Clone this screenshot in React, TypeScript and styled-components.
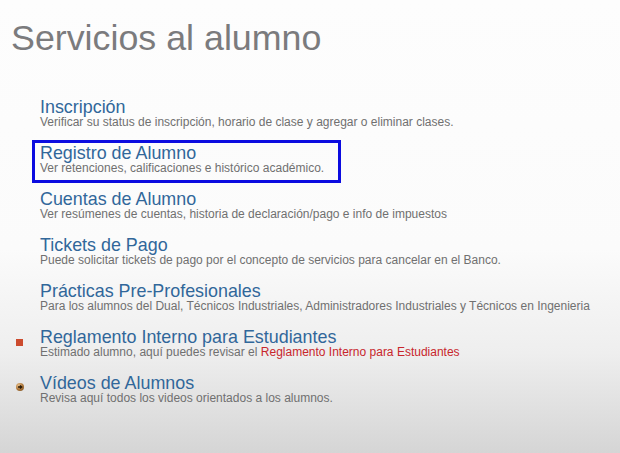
import styled, { createGlobalStyle } from "styled-components"

const GlobalStyle = createGlobalStyle`
html, body {
    margin: 0;
    padding: 0;
}
body {
    font-family: "Liberation Sans", Arial, sans-serif;
}
`

const Page = styled.div`
min-height: 453px;
height: 100vh;
box-sizing: border-box;
padding: 18px 0 0 12px;
background: linear-gradient(to bottom, #fdfdfd 0%, #fbfbfb 55%, #eeeeee 78%, #d5d5d5 100%);
overflow: hidden;
`

const Heading = styled.h1`
margin: 0 0 0 -1px;
font-size: 35.8px;
font-weight: normal;
line-height: 41px;
color: #7b7b7d;
`

const List = styled.div`
display: flex;
flex-direction: column;
gap: 3px;
margin-top: 35px;
`

const Row = styled.div`
display: flex;
align-items: flex-start;
`

const IconSlot = styled.div`
width: 20px;
flex: none;
`

const Square = styled.div`
width: 7px;
height: 7px;
margin: 15px 0 0 4px;
background: #cc4b2e;
`

const Ball = styled.div`
width: 8px;
height: 8px;
margin: 13px 0 0 4px;
border-radius: 50%;
background: radial-gradient(circle at 35% 30%, #e6bd88 0%, #ab7438 55%, #70481c 100%);
display: flex;

svg {
    display: block;
}
`

const Item = styled.div<{ $active?: boolean }>`
display: flex;
flex-direction: column;
padding: 1px 14px 5px 5px;
border: 3px solid ${(p) => (p.$active ? "#0c0ce0" : "transparent")};
`

const ItemTitle = styled.a`
font-size: 17.9px;
line-height: 18px;
color: #31679a;
text-decoration: none;
white-space: nowrap;
`

const ItemText = styled.div`
font-size: 12px;
line-height: 13px;
color: #707070;
white-space: nowrap;
`

const RedLink = styled.a`
color: #c8262c;
text-decoration: none;
`

type Service = {
    title: string
    text: React.ReactNode
    icon?: "square" | "ball"
    active?: boolean
}

const services: Service[] = [
    {
        title: "Inscripción",
        text: "Verificar su status de inscripción, horario de clase y agregar o eliminar clases.",
    },
    {
        title: "Registro de Alumno",
        text: "Ver retenciones, calificaciones e histórico académico.",
        active: true,
    },
    {
        title: "Cuentas de Alumno",
        text: "Ver resúmenes de cuentas, historia de declaración/pago e info de impuestos",
    },
    {
        title: "Tickets de Pago",
        text: "Puede solicitar tickets de pago por el concepto de servicios para cancelar en el Banco.",
    },
    {
        title: "Prácticas Pre-Profesionales",
        text: "Para los alumnos del Dual, Técnicos Industriales, Administradores Industriales y Técnicos en Ingenieria",
    },
    {
        title: "Reglamento Interno para Estudiantes",
        text: (
            <>
                Estimado alumno, aquí puedes revisar el{" "}
                <RedLink href="#">Reglamento Interno para Estudiantes</RedLink>
            </>
        ),
        icon: "square",
    },
    {
        title: "Vídeos de Alumnos",
        text: "Revisa aquí todos los videos orientados a los alumnos.",
        icon: "ball",
    },
]

const App = () => {
    return (
        <Page>
            <GlobalStyle />
            <Heading>Servicios al alumno</Heading>
            <List>
                {services.map((s) => (
                    <Row key={s.title}>
                        <IconSlot>
                            {s.icon === "square" && <Square />}
                            {s.icon === "ball" && (
                                <Ball>
                                    <svg width="8" height="8" viewBox="0 0 8 8">
                                        <path d="M2 4h3.6M4 2.4L5.8 4 4 5.6" stroke="#2a1a08" strokeWidth="1.3" fill="none" />
                                    </svg>
                                </Ball>
                            )}
                        </IconSlot>
                        <Item $active={s.active}>
                            <ItemTitle href="#">{s.title}</ItemTitle>
                            <ItemText>{s.text}</ItemText>
                        </Item>
                    </Row>
                ))}
            </List>
        </Page>
    )
}

export default App
